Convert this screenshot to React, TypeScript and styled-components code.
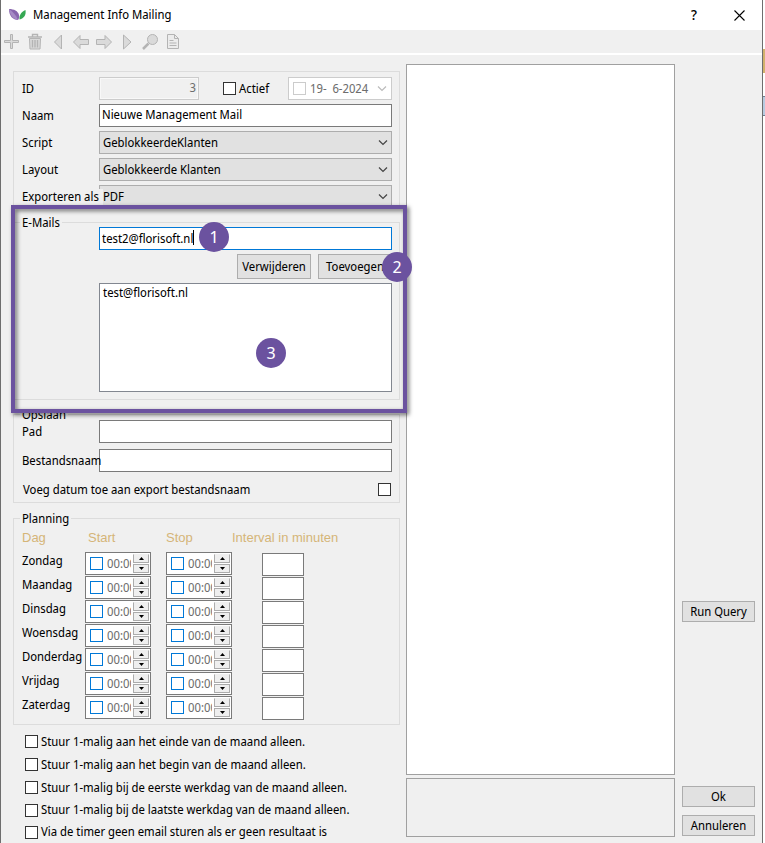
import React from "react";
import styled, { createGlobalStyle, css } from "styled-components";

const ui = '"Noto Sans Display", "Open Sans", "Noto Sans", sans-serif';
const purple = "#6b529f";

const GlobalStyle = createGlobalStyle`
  *, *::before, *::after { box-sizing: border-box; }
  body { margin: 0; background: #fff; font: 12px/16px ${ui}; color: #000; }
  button, input, select { font: inherit; color: inherit; margin: 0; }
`;

const Desktop = styled.div`
  min-height: 100vh;
  padding-right: 2px;
  display: flex;
  background: linear-gradient(#fff 49px, #d2b16c 49px, #d2b16c 73px, #fff 73px, #fff 96px,
    #6f7f90 96px, #6f7f90 97px, #b8cbe0 97px, #b8cbe0 115px, #6f7f90 115px, #6f7f90 116px, #fff 116px);
`;

const Window = styled.main`
  flex: 1;
  min-width: 0;
  display: flex;
  flex-direction: column;
  background: #f0f0f0;
  border: solid #6e6e6e;
  border-width: 0 1px;
`;

const TitleBar = styled.header`
  display: flex;
  align-items: center;
  height: 30px;
  padding: 0 8px 0 7px;
  background: #fff;
`;

const Title = styled.h1`
  flex: 1;
  margin: 0 0 0 6px;
  font-size: 12px;
  line-height: 16px;
  font-weight: 400;
`;

const CaptionButton = styled.button`
  display: grid;
  place-items: center;
  width: 30px;
  height: 28px;
  padding: 0;
  border: 0;
  background: none;
  font-size: 14px;
  font-weight: 500;
  & + & { margin-left: 15px; }
`;

const Toolbar = styled.div`
  display: flex;
  align-items: center;
  gap: 5px;
  height: 25px;
  padding: 1px 2px 0;
  border-bottom: 2px solid #fff;
`;

const ToolButton = styled.button`
  width: 18px;
  height: 18px;
  padding: 0;
  border: 0;
  background: none;
  svg { display: block; }
`;

const Body = styled.div`
  flex: 1;
  display: grid;
  grid-template-columns: 387px minmax(0, 1fr) 73px;
  padding: 0 7px 0 12px;
`;

const FormColumn = styled.form`
  padding-top: 16px;
`;

const Panel = styled.section`
  display: grid;
  gap: 4px;
  padding: 5px 7px 0 8px;
  border: 1px solid #dcdcdc;
`;

const Group = styled.fieldset<{ $pad?: string; $top?: number }>`
  min-width: 0;
  margin: ${(p) => p.$top ?? 0}px 0 0;
  padding: ${(p) => p.$pad ?? "0 7px 0 8px"};
  border: 1px solid #dcdcdc;
`;

const Legend = styled.legend`
  height: 10px;
  margin-left: -2px;
  padding: 0 2px;
  line-height: 12px;
`;

const Stack = styled.div<{ $gap: number }>`
  display: grid;
  gap: ${(p) => p.$gap}px;
`;

const Row = styled.div`
  display: grid;
  grid-template-columns: 77px minmax(0, 1fr);
  align-items: center;
  min-height: 23px;
`;

const Label = styled.label<{ $cover?: boolean }>`
  z-index: 1;
  white-space: nowrap;
  ${(p) => p.$cover && css`
    justify-self: start;
    padding-right: 4px;
    background: #f0f0f0;
  `}
`;

const fieldBox = css`
  width: 100%;
  height: 23px;
  border: 1px solid #7a7a7a;
  border-radius: 0;
  background: #fff;
  outline: none;
`;

const TextInput = styled.input<{ $active?: boolean }>`
  ${fieldBox}
  padding: 0 2px 2px;
  ${(p) => p.$active && css`
    padding-bottom: 0;
    border-color: #0078d7;
  `}
`;

const IdInput = styled(TextInput)`
  width: 100px;
  background: #f0f0f0;
  border-color: #ccc;
  box-shadow: inset 0 0 0 1px #f8f8f8;
  color: #6d6d6d;
  text-align: right;
`;

const IdLine = styled.div`
  display: flex;
  align-items: center;
`;

const Combo = styled.div`
  display: grid;
  align-items: center;
  > * { grid-area: 1 / 1; }
  svg { justify-self: end; margin-right: 4px; pointer-events: none; }
`;

const Select = styled.select`
  ${fieldBox}
  appearance: none;
  padding: 0 3px;
  border-color: #adadad;
  background: #e1e1e1;
`;

const CheckBox = styled.input.attrs({ type: "checkbox" })<{ $tone?: string }>`
  appearance: none;
  flex: none;
  width: 13px;
  height: 13px;
  border: 1px solid ${(p) => p.$tone ?? "#333"};
  background: #fff;
`;

const CheckLabel = styled.label`
  display: flex;
  align-items: center;
  gap: 3px;
  white-space: nowrap;
`;

const ActiveLabel = styled(CheckLabel)`
  margin: 0 auto 0 24px;
`;

const DatePicker = styled.div`
  display: flex;
  align-items: center;
  gap: 4px;
  width: 104px;
  height: 23px;
  padding: 0 4px;
  border: 1px solid #ccc;
  background: #fff;
  svg { flex: none; }
`;

const BareInput = styled.input`
  flex: 1;
  min-width: 0;
  width: 0;
  padding: 0;
  border: 0;
  background: none;
  color: #6d6d6d;
  outline: none;
`;

const EmailArea = styled.div`
  position: relative;
  margin-top: 8px;
`;

const Indented = styled.div`
  display: grid;
  gap: 4px;
  padding-left: 77px;
`;

const CaretField = styled.div`
  position: relative;
`;

const Caret = styled.i`
  position: absolute;
  left: 94px;
  top: 3px;
  width: 1px;
  height: 15px;
  background: #000;
`;

const ButtonLine = styled.div`
  display: flex;
  justify-content: flex-end;
  gap: 7px;
`;

const PushButton = styled.button<{ $tall?: boolean }>`
  width: ${(p) => (p.$tall ? "74px" : "100%")};
  height: ${(p) => (p.$tall ? 25 : 21)}px;
  padding: 0;
  border: 1px solid #adadad;
  background: #e1e1e1;
`;

const ListBox = styled.select`
  ${fieldBox}
  display: block;
  height: 109px;
  padding: 0 3px;
  border-color: #828790;
  appearance: none;
  overflow: hidden;
  option { padding: 0; min-height: 15px; }
`;

const Highlight = styled.div`
  position: absolute;
  z-index: 2;
  inset: -12px -7px -13px -2px;
  border: 4px solid ${purple};
  filter: drop-shadow(2px 2px 2px rgba(0, 0, 0, 0.55));
  pointer-events: none;
`;

const Badge = styled.span<{ $x: number; $y: number }>`
  position: absolute;
  z-index: 3;
  left: ${(p) => p.$x}px;
  top: ${(p) => p.$y}px;
  width: 30px;
  height: 30px;
  border-radius: 50%;
  background: ${purple};
  color: #fff;
  font-size: 17px;
  line-height: 29px;
  text-align: center;
`;

const SpreadLabel = styled.label`
  display: flex;
  align-items: center;
  justify-content: space-between;
  height: 23px;
  padding: 0 1px;
`;

const Plan = styled.table`
  width: 100%;
  table-layout: fixed;
  border-collapse: collapse;
  td, th { padding: 0; text-align: left; font-weight: 400; vertical-align: top; }
  tbody tr { height: 24px; }
  tbody th { line-height: 18px; }
  thead th {
    height: 22px;
    font: 13px/16px "Liberation Sans", Arial, sans-serif;
    color: #d5b578;
    white-space: nowrap;
  }
`;

const Col = styled.col<{ $w?: number }>`
  width: ${(p) => (p.$w ? `${p.$w}px` : "auto")};
`;

const StartHead = styled.th`
  && { padding-left: 3px; }
`;

const TimeBox = styled.div`
  display: flex;
  align-items: center;
  width: 66px;
  height: 23px;
  padding: 0 1px 0 4px;
  border: 1px solid #7a7a7a;
  background: #fff;
  input + input { margin: 0 2px 0 4px; }
`;

const Spinner = styled.div`
  display: grid;
  gap: 1px;
  width: 16px;
`;

const SpinButton = styled.button`
  display: grid;
  place-items: center;
  height: 9px;
  padding: 0;
  border: 1px solid #acacac;
  background: #efefef;
  &:first-child { border-top-color: #efefef; }
`;

const Minutes = styled.input`
  ${fieldBox}
  display: block;
  width: 42px;
  margin: 1px 0 0 30px;
`;

const Options = styled.div`
  margin-top: 5px;
  padding-left: 12px;
  label { height: 23px; }
  label:nth-child(n + 4) { height: 22px; }
`;

const ResultColumn = styled.div`
  display: flex;
  flex-direction: column;
  gap: 3px;
  padding: 9px 7px 6px 6px;
`;

const Results = styled.div<{ $footer?: boolean }>`
  ${(p) => (p.$footer ? "height: 59px;" : "flex: 1; background: #fff;")}
  border: 1px solid #a0a0a0;
`;

const Actions = styled.div`
  display: flex;
  flex-direction: column;
  justify-content: flex-end;
  gap: 8px;
  padding-bottom: 7px;
  button:first-child { margin-bottom: 156px; }
`;

const Chevron = ({ color = "#444" }: { color?: string }) => (
  <svg width="10" height="7" viewBox="0 0 10 7" fill="none" stroke={color} strokeWidth="1.2">
    <path d="M1 1.5 5 5.5 9 1.5" />
  </svg>
);

const Logo = () => (
  <svg width="19" height="16" viewBox="0 0 19 16">
    <path d="M1 2C6 2 10 4 11 8c.5 2 0 4-1 5C5 13 1 9 1 2Z" fill="#8865ad" />
    <path d="M1 2c4 3 7 6 9 11C5 12 2 8 1 2Z" fill="#a58ac4" />
    <path d="M17.500 3c.8 5-1.500 8.500-6 9.500C11 8.500 13 5 17.500 3Z" fill="#35a853" />
  </svg>
);

const tools: { name: string; art: React.ReactNode }[] = [
  { name: "Toevoegen", art: <path d="M7.500 1.500h2v6h6v2h-6v6h-2v-6h-6v-2h6Z" /> },
  {
    name: "Wissen",
    art: <><path d="M3.500 5.500h11l-.5 10.500H4Z" /><path d="M2 4h14M6.500 4V1.500h5V4M6.500 7v7.500M9 7v7.500M11.500 7v7.500" fill="none" strokeWidth="1.4" /></>,
  },
  { name: "Eerste", art: <path d="M12.500 2v14L5.500 9Z" /> },
  { name: "Vorige", art: <path d="M1.500 9 8 2.500v4h8.500v5H8v4Z" /> },
  { name: "Volgende", art: <path d="M16.500 9 10 2.500v4H1.500v5H10v4Z" /> },
  { name: "Laatste", art: <path d="M5.500 2v14L13 9Z" /> },
  {
    name: "Zoeken",
    art: <><path d="m7.500 10.500-5.500 5.500" strokeWidth="2.500" /><circle cx="11.500" cy="6.500" r="5" /></>,
  },
  {
    name: "Rapport",
    art: <><path d="M3.500 1.500h7l4 4v10h-11Z" fill="#ececec" /><path d="M10.500 1.500v4h4M5.500 7.500h4M5.500 10h7M5.500 12.500h7" fill="none" /></>,
  },
];

const days = ["Zondag", "Maandag", "Dinsdag", "Woensdag", "Donderdag", "Vrijdag", "Zaterdag"];

const options = [
  "Stuur 1-malig aan het einde van de maand alleen.",
  "Stuur 1-malig aan het begin van de maand alleen.",
  "Stuur 1-malig bij de eerste werkdag van de maand alleen.",
  "Stuur 1-malig bij de laatste werkdag van de maand alleen.",
  "Via de timer geen email sturen als er geen resultaat is",
];

const Time = ({ label }: { label: string }) => (
  <TimeBox>
    <CheckBox $tone="#0078d7" aria-label={`${label} actief`} />
    <BareInput defaultValue="00:00" aria-label={label} />
    <Spinner>
      <SpinButton type="button" aria-label={`${label} later`}>
        <svg width="5" height="3" viewBox="0 0 5 3"><path d="M0 3 2.500 0 5 3Z" /></svg>
      </SpinButton>
      <SpinButton type="button" aria-label={`${label} eerder`}>
        <svg width="5" height="3" viewBox="0 0 5 3"><path d="M0 0 2.500 3 5 0Z" /></svg>
      </SpinButton>
    </Spinner>
  </TimeBox>
);

const ComboRow = ({ id, label, value, cover }: { id: string; label: string; value: string; cover?: boolean }) => (
  <Row>
    <Label htmlFor={id} $cover={cover}>{label}</Label>
    <Combo>
      <Select id={id}><option>{value}</option></Select>
      <Chevron />
    </Combo>
  </Row>
);

export default function App() {
  return (
    <Desktop>
      <GlobalStyle />
      <Window>
        <TitleBar>
          <Logo />
          <Title>Management Info Mailing</Title>
          <CaptionButton aria-label="Help">?</CaptionButton>
          <CaptionButton aria-label="Sluiten">
            <svg width="11" height="11" viewBox="0 0 11 11" stroke="#000" strokeWidth="1.1">
              <path d="m.5.5 10 10M10.500.5l-10 10" />
            </svg>
          </CaptionButton>
        </TitleBar>
        <Toolbar>
          {tools.map((t) => (
            <ToolButton key={t.name} aria-label={t.name}>
              <svg width="18" height="18" viewBox="0 0 18 18" fill="#dadada" stroke="#b4b4b4">{t.art}</svg>
            </ToolButton>
          ))}
        </Toolbar>
        <Body>
          <FormColumn>
            <Panel>
              <Row>
                <Label htmlFor="id">ID</Label>
                <IdLine>
                  <IdInput id="id" defaultValue="3" disabled />
                  <ActiveLabel><CheckBox />Actief</ActiveLabel>
                  <DatePicker>
                    <CheckBox $tone="#ccc" disabled aria-label="Datum gebruiken" />
                    <BareInput defaultValue="19-  6-2024" disabled aria-label="Datum" />
                    <Chevron color="#bbb" />
                  </DatePicker>
                </IdLine>
              </Row>
              <Row>
                <Label htmlFor="naam">Naam</Label>
                <TextInput id="naam" defaultValue="Nieuwe Management Mail" />
              </Row>
              <ComboRow id="script" label="Script" value="GeblokkeerdeKlanten" />
              <ComboRow id="layout" label="Layout" value="Geblokkeerde Klanten" />
              <ComboRow id="export" label="Exporteren als" value="PDF" cover />
            </Panel>

            <EmailArea>
              <Group $pad="0 7px 7px 8px">
                <Legend>E-Mails</Legend>
                <Indented>
                  <CaretField>
                    <TextInput $active defaultValue="test2@florisoft.nl" aria-label="E-mailadres" />
                    <Caret />
                  </CaretField>
                  <ButtonLine>
                    <PushButton type="button" $tall>Verwijderen</PushButton>
                    <PushButton type="button" $tall>Toevoegen</PushButton>
                  </ButtonLine>
                  <ListBox size={6} aria-label="E-mailadressen">
                    <option>test@florisoft.nl</option>
                  </ListBox>
                </Indented>
              </Group>
              <Highlight />
              <Badge $x={186} $y={5}>1</Badge>
              <Badge $x={369} $y={35}>2</Badge>
              <Badge $x={243} $y={121}>3</Badge>
            </EmailArea>

            <Group $top={9} $pad="1px 7px 1px 8px">
              <Legend>Opslaan</Legend>
              <Stack $gap={6}>
                <Row>
                  <Label htmlFor="pad">Pad</Label>
                  <TextInput id="pad" />
                </Row>
                <Row>
                  <Label htmlFor="bestand">Bestandsnaam</Label>
                  <TextInput id="bestand" />
                </Row>
                <SpreadLabel>Voeg datum toe aan export bestandsnaam<CheckBox /></SpreadLabel>
              </Stack>
            </Group>

            <Group $top={10} $pad="7px 7px 4px 8px">
              <Legend>Planning</Legend>
              <Plan>
                <colgroup><Col $w={63} /><Col $w={81} /><Col $w={66} /><Col /></colgroup>
                <thead>
                  <tr><th>Dag</th><StartHead>Start</StartHead><th>Stop</th><th>Interval in minuten</th></tr>
                </thead>
                <tbody>
                  {days.map((d) => (
                    <tr key={d}>
                      <th scope="row">{d}</th>
                      <td><Time label={`${d} start`} /></td>
                      <td><Time label={`${d} stop`} /></td>
                      <td><Minutes aria-label={`${d} interval in minuten`} /></td>
                    </tr>
                  ))}
                </tbody>
              </Plan>
            </Group>

            <Options>
              {options.map((o) => <CheckLabel key={o}><CheckBox />{o}</CheckLabel>)}
            </Options>
          </FormColumn>

          <ResultColumn>
            <Results />
            <Results $footer />
          </ResultColumn>

          <Actions>
            <PushButton type="button">Run Query</PushButton>
            <PushButton type="button">Ok</PushButton>
            <PushButton type="button">Annuleren</PushButton>
          </Actions>
        </Body>
      </Window>
    </Desktop>
  );
}
